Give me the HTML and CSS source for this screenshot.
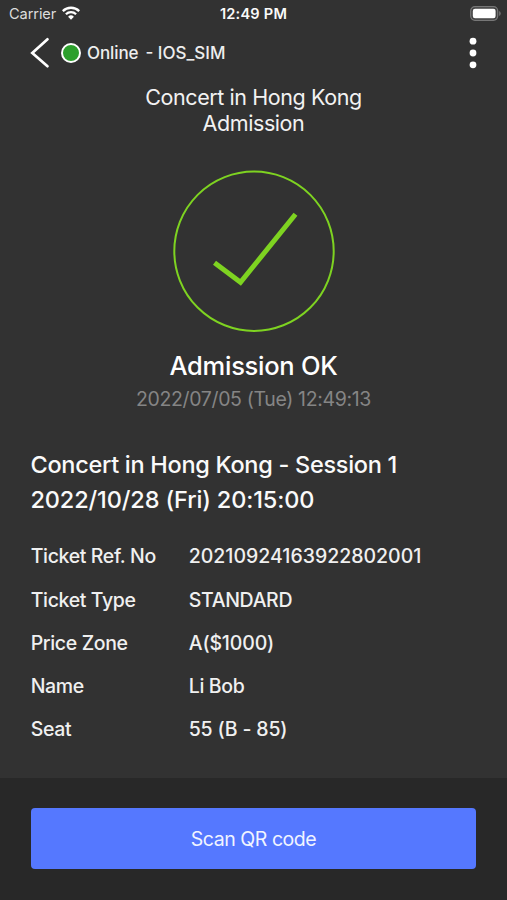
FILE: index.html
```html
<!DOCTYPE html>
<html lang="en">
<head>
<meta charset="utf-8">
<title>Admission</title>
<link rel="stylesheet" href="styles.css">
</head>
<body>
<div class="screen">
  <div class="status">
    <div class="carrier"><span>Carrier</span>
      <svg class="wifi" width="18" height="14" viewBox="0 0 18 14" fill="none" stroke="#fff" stroke-width="2.3"><path d="M.8 5.1a11.7 11.7 0 0 1 16.4 0M3.9 8.2a7.3 7.3 0 0 1 10.2 0"/><path d="M9 13.8 6.1 10.8a4.1 4.1 0 0 1 5.8 0z" fill="#fff" stroke="none"/></svg>
    </div>
    <div class="clock">12:49 PM</div>
    <svg class="battery" width="31" height="15" viewBox="0 0 31 15"><rect x=".7" y=".7" width="27" height="13.6" rx="4.2" fill="#414141" stroke="#777" stroke-width="1.2"/><rect x="2.8" y="2.8" width="22.8" height="9.4" rx="2.2" fill="#fff"/><path d="M29.2 5v5q1.5-.7 1.5-2.5T29.2 5z" fill="#777"/></svg>
  </div>
  <header class="nav">
    <svg class="back" width="20" height="32" viewBox="0 0 20 32" fill="none" stroke="#fff" stroke-width="2.7" stroke-linecap="round"><path d="M17.5 2.3 2.3 16l15.2 13.2"/></svg>
    <span class="dot"></span>
    <span class="online">Online</span><span class="device">- IOS_SIM</span>
    <svg class="more" width="8" height="32" viewBox="0 0 8 32" fill="#fff"><circle cx="4" cy="4.2" r="3.4"/><circle cx="4" cy="16" r="3.4"/><circle cx="4" cy="27.8" r="3.4"/></svg>
  </header>
  <main class="content">
    <h1 class="title"><span class="title-event">Concert in Hong Kong</span><br><span class="title-mode">Admission</span></h1>
    <svg class="check" width="162" height="162" viewBox="0 0 162 162" fill="none" stroke="#7ed321"><circle cx="81" cy="81.2" r="79.7" stroke-width="2"/><path d="M41.5 92.8 67.5 112.3 122.5 44.3" stroke-width="5"/></svg>
    <div class="result"><span>Admission OK</span></div>
    <div class="time"><span>2022/07/05 (Tue) 12:49:13</span></div>
    <section class="session"><div><span class="session-name">Concert in Hong Kong - Session 1</span></div><div><span class="session-date">2022/10/28 (Fri) 20:15:00</span></div></section>
    <dl class="details">
      <dt>Ticket Ref. No</dt><dd class="ref">20210924163922802001</dd>
      <dt>Ticket Type</dt><dd>STANDARD</dd>
      <dt>Price Zone</dt><dd class="price">A($1000)</dd>
      <dt>Name</dt><dd>Li Bob</dd>
      <dt>Seat</dt><dd class="seat">55 (B - 85)</dd>
    </dl>
  </main>
  <footer class="footer"><button class="scan" type="button"><span>Scan QR code</span></button></footer>
</div>
</body>
</html>
```

FILE: styles.css
```css
* { box-sizing: border-box; }
body { margin: 0; background: #323232; color: #fafafa; font-family: Inter, "Liberation Sans", sans-serif; }
.screen { display: flex; flex-direction: column; height: 900px; overflow: hidden; }
.status { display: grid; grid-template-columns: 1fr auto 1fr; align-items: center; height: 28px; padding: 0 6px 0 9px; }
.carrier { display: flex; align-items: center; gap: 6px; margin-top: -1px; font-size: 14.6px; color: #ddd; }
.carrier span { width: 47px; letter-spacing: -.1px; }
.wifi { margin-top: -1px; }
.clock { font-size: 14.6px; font-weight: 600; letter-spacing: .2px; margin-right: 3px; }
.battery { justify-self: end; margin-top: -1px; }
.nav { display: flex; align-items: center; height: 49px; padding: 0 30px; font-size: 17px; font-weight: 500; color: #eee; }
.dot { width: 20px; height: 20px; margin: 0 6px 0 11px; border: 2px solid #fff; border-radius: 50%; background: #2c9f2c; }
.online { letter-spacing: -.1px; }
.device { margin-left: 7px; }
.more { margin-left: auto; }
.content { flex: 1; padding: 7px 31px 0; }
.title { margin: 0; font-size: 21.5px; line-height: 26px; font-weight: 400; text-align: center; letter-spacing: -.42px; color: #f2f2f2; }
.check { display: block; margin: 34px auto 0; }
.result { margin-top: 16px; font-size: 25.5px; line-height: 36px; font-weight: 500; text-align: center; letter-spacing: -.27px; color: #fff; }
.time { margin-top: -1px; font-size: 19.5px; line-height: 32px; text-align: center; letter-spacing: -.36px; color: #858585; }
.session { margin: 32px 0 0 -.5px; font-size: 23.5px; line-height: 35.4px; font-weight: 500; }
.session-name { letter-spacing: -.29px; }
.session-date { letter-spacing: -.14px; }
.details { display: grid; grid-template-columns: 158px 1fr; grid-auto-rows: 43.2px; align-items: center; margin: 17px 0 0 -.3px; font-size: 19.5px; font-weight: 500; color: #f0f0f0; }
.details dt { letter-spacing: -.36px; }
.details dd { margin: 0; letter-spacing: -.33px; }
.details .ref { letter-spacing: 0; }
.details .price, .details .seat { letter-spacing: -.15px; }
.footer { height: 122px; padding: 30px 31px; background: #282828; }
.scan { width: 445px; height: 61px; padding: 0; border: 0; border-radius: 4px; background: #5578ff; color: #f1f4ff; font: 400 19.5px Inter, "Liberation Sans", sans-serif; letter-spacing: -.45px; }
```
